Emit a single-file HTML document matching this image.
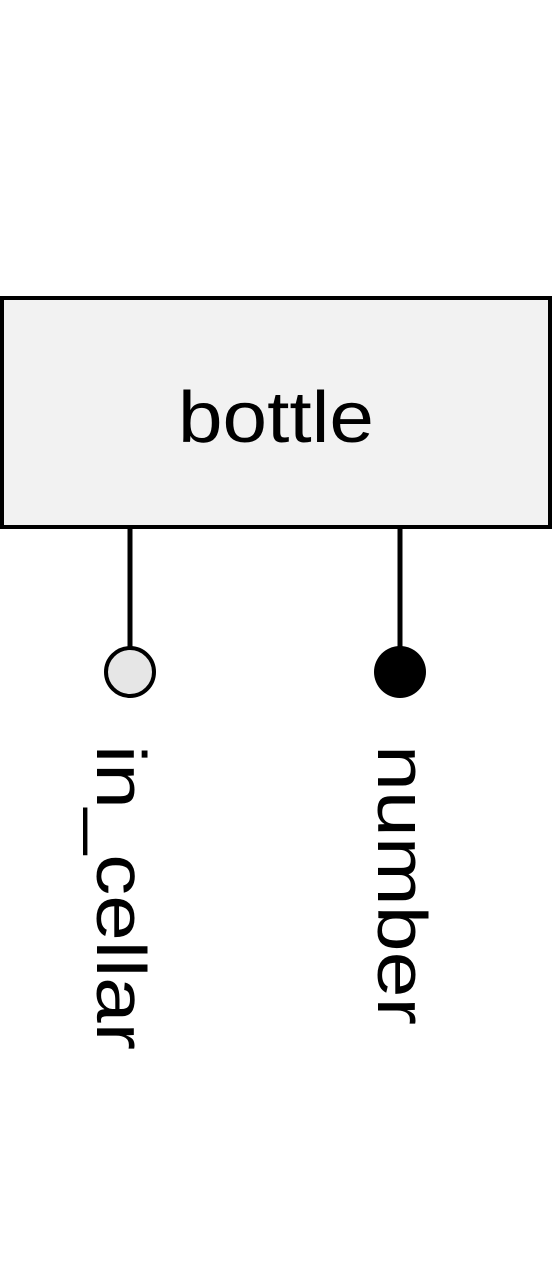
<!DOCTYPE html>
<html><head><meta charset="utf-8"><style>html,body{margin:0;padding:0;background:#fff;}svg{display:block}</style></head>
<body>
<svg width="552" height="1283" viewBox="0 0 552 1283" xmlns="http://www.w3.org/2000/svg">
<rect x="2" y="298" width="548" height="229" fill="#f2f2f2" stroke="#000" stroke-width="4"/>
<text x="178" y="442" font-family="Liberation Sans, sans-serif" font-size="72" textLength="196" lengthAdjust="spacingAndGlyphs" fill="#000">bottle</text>
<line x1="130" y1="527" x2="130" y2="648" stroke="#000" stroke-width="5"/>
<circle cx="130" cy="672" r="24" fill="#e6e6e6" stroke="#000" stroke-width="4"/>
<line x1="400" y1="527" x2="400" y2="648" stroke="#000" stroke-width="5"/>
<circle cx="400" cy="672" r="26" fill="#000"/>
<text transform="translate(97,745) rotate(90)" font-family="Liberation Sans, sans-serif" font-size="70" textLength="305" lengthAdjust="spacingAndGlyphs" fill="#000">in_cellar</text>
<text transform="translate(378,745) rotate(90)" font-family="Liberation Sans, sans-serif" font-size="70" textLength="280" lengthAdjust="spacingAndGlyphs" fill="#000">number</text>
</svg>
</body></html>
